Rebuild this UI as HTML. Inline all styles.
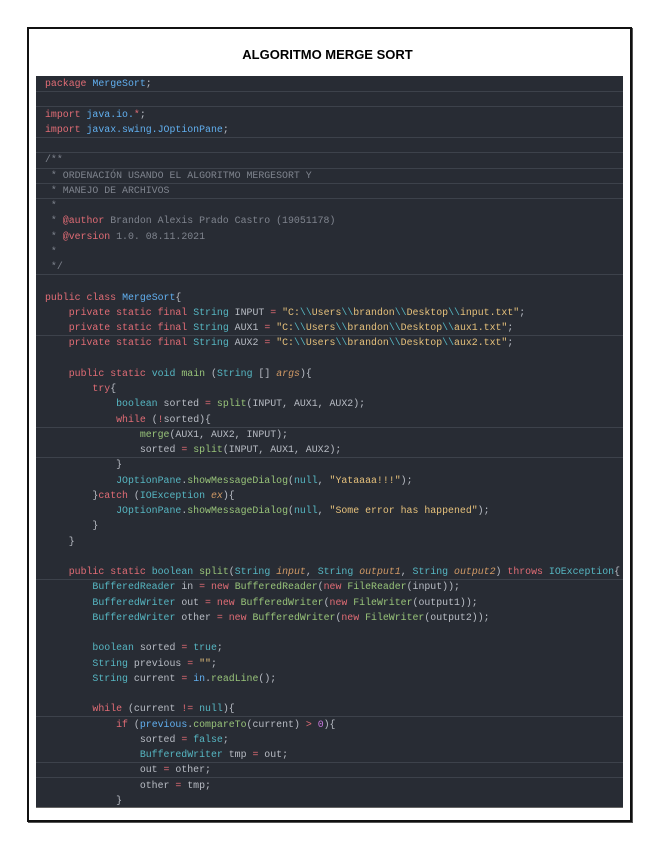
<!DOCTYPE html>
<html><head><meta charset="utf-8"><style>
html,body{margin:0;padding:0;background:#fff;width:655px;height:848px;overflow:hidden}
.frame{position:absolute;left:27px;top:27px;width:601px;height:791px;border:2px solid #111;box-shadow:1px 1px 0 #555}
.title{position:absolute;left:0;top:47px;width:655px;text-align:center;font:bold 13px "Liberation Sans",sans-serif;color:#000}
.code{position:absolute;left:36px;top:76px;width:587px;height:731px;background:#282c34;overflow:hidden;border-bottom:1px solid #666}
pre{margin:0;padding:0 0 0 9px;font:9.9px/15.25px "Liberation Mono",monospace;color:#b8bcc4;white-space:pre}
.k{color:#e06c75}.t{color:#56b6c2}.i{color:#61afef}.s{color:#e5c07b}.f{color:#98c379}.c{color:#7f848e}.p{color:#d19a66;font-style:italic}.n{color:#c678dd}
.sep{position:absolute;left:0;width:587px;height:1px;background:#3d424b}
</style></head><body>
<div class="frame"></div>
<div class="title">ALGORITMO MERGE SORT</div>
<div class="code">
<div class="sep" style="top:15px"></div><div class="sep" style="top:30px"></div><div class="sep" style="top:61px"></div><div class="sep" style="top:76px"></div><div class="sep" style="top:92px"></div><div class="sep" style="top:107px"></div><div class="sep" style="top:122px"></div><div class="sep" style="top:198px"></div><div class="sep" style="top:259px"></div><div class="sep" style="top:351px"></div><div class="sep" style="top:381px"></div><div class="sep" style="top:503px"></div><div class="sep" style="top:640px"></div><div class="sep" style="top:686px"></div><div class="sep" style="top:701px"></div>
<pre><span class="k">package</span> <span class="i">MergeSort</span>;

<span class="k">import</span> <span class="i">java.io.</span><span class="k">*</span>;
<span class="k">import</span> <span class="i">javax.swing.JOptionPane</span>;

<span class="c">/**
 * ORDENACIÓN USANDO EL ALGORITMO MERGESORT Y
 * MANEJO DE ARCHIVOS
 *
 * <span class="k">@author</span> Brandon Alexis Prado Castro (19051178)
 * <span class="k">@version</span> 1.0. 08.11.2021
 *
 */</span>

<span class="k">public class</span> <span class="i">MergeSort</span>{
    <span class="k">private static final</span> <span class="t">String</span> INPUT <span class="k">=</span> <span class="s">"C:</span><span class="t">\\</span><span class="s">Users</span><span class="t">\\</span><span class="s">brandon</span><span class="t">\\</span><span class="s">Desktop</span><span class="t">\\</span><span class="s">input.txt"</span>;
    <span class="k">private static final</span> <span class="t">String</span> AUX1 <span class="k">=</span> <span class="s">"C:</span><span class="t">\\</span><span class="s">Users</span><span class="t">\\</span><span class="s">brandon</span><span class="t">\\</span><span class="s">Desktop</span><span class="t">\\</span><span class="s">aux1.txt"</span>;
    <span class="k">private static final</span> <span class="t">String</span> AUX2 <span class="k">=</span> <span class="s">"C:</span><span class="t">\\</span><span class="s">Users</span><span class="t">\\</span><span class="s">brandon</span><span class="t">\\</span><span class="s">Desktop</span><span class="t">\\</span><span class="s">aux2.txt"</span>;

    <span class="k">public static</span> <span class="t">void</span> <span class="f">main</span> (<span class="t">String</span> [] <span class="p">args</span>){
        <span class="k">try</span>{
            <span class="t">boolean</span> sorted <span class="k">=</span> <span class="f">split</span>(INPUT, AUX1, AUX2);
            <span class="k">while</span> (<span class="k">!</span>sorted){
                <span class="f">merge</span>(AUX1, AUX2, INPUT);
                sorted <span class="k">=</span> <span class="f">split</span>(INPUT, AUX1, AUX2);
            }
            <span class="t">JOptionPane</span>.<span class="f">showMessageDialog</span>(<span class="t">null</span>, <span class="s">"Yataaaa!!!"</span>);
        }<span class="k">catch</span> (<span class="t">IOException</span> <span class="p">ex</span>){
            <span class="t">JOptionPane</span>.<span class="f">showMessageDialog</span>(<span class="t">null</span>, <span class="s">"Some error has happened"</span>);
        }
    }

    <span class="k">public static</span> <span class="t">boolean</span> <span class="f">split</span>(<span class="t">String</span> <span class="p">input</span>, <span class="t">String</span> <span class="p">output1</span>, <span class="t">String</span> <span class="p">output2</span>) <span class="k">throws</span> <span class="t">IOException</span>{
        <span class="t">BufferedReader</span> in <span class="k">=</span> <span class="k">new</span> <span class="f">BufferedReader</span>(<span class="k">new</span> <span class="f">FileReader</span>(input));
        <span class="t">BufferedWriter</span> out <span class="k">=</span> <span class="k">new</span> <span class="f">BufferedWriter</span>(<span class="k">new</span> <span class="f">FileWriter</span>(output1));
        <span class="t">BufferedWriter</span> other <span class="k">=</span> <span class="k">new</span> <span class="f">BufferedWriter</span>(<span class="k">new</span> <span class="f">FileWriter</span>(output2));

        <span class="t">boolean</span> sorted <span class="k">=</span> <span class="t">true</span>;
        <span class="t">String</span> previous <span class="k">=</span> <span class="s">""</span>;
        <span class="t">String</span> current <span class="k">=</span> <span class="i">in</span>.<span class="f">readLine</span>();

        <span class="k">while</span> (current <span class="k">!=</span> <span class="t">null</span>){
            <span class="k">if</span> (<span class="i">previous</span>.<span class="f">compareTo</span>(current) <span class="k">&gt;</span> <span class="n">0</span>){
                sorted <span class="k">=</span> <span class="t">false</span>;
                <span class="t">BufferedWriter</span> tmp <span class="k">=</span> out;
                out <span class="k">=</span> other;
                other <span class="k">=</span> tmp;
            }</pre>
</div>
</body></html>
